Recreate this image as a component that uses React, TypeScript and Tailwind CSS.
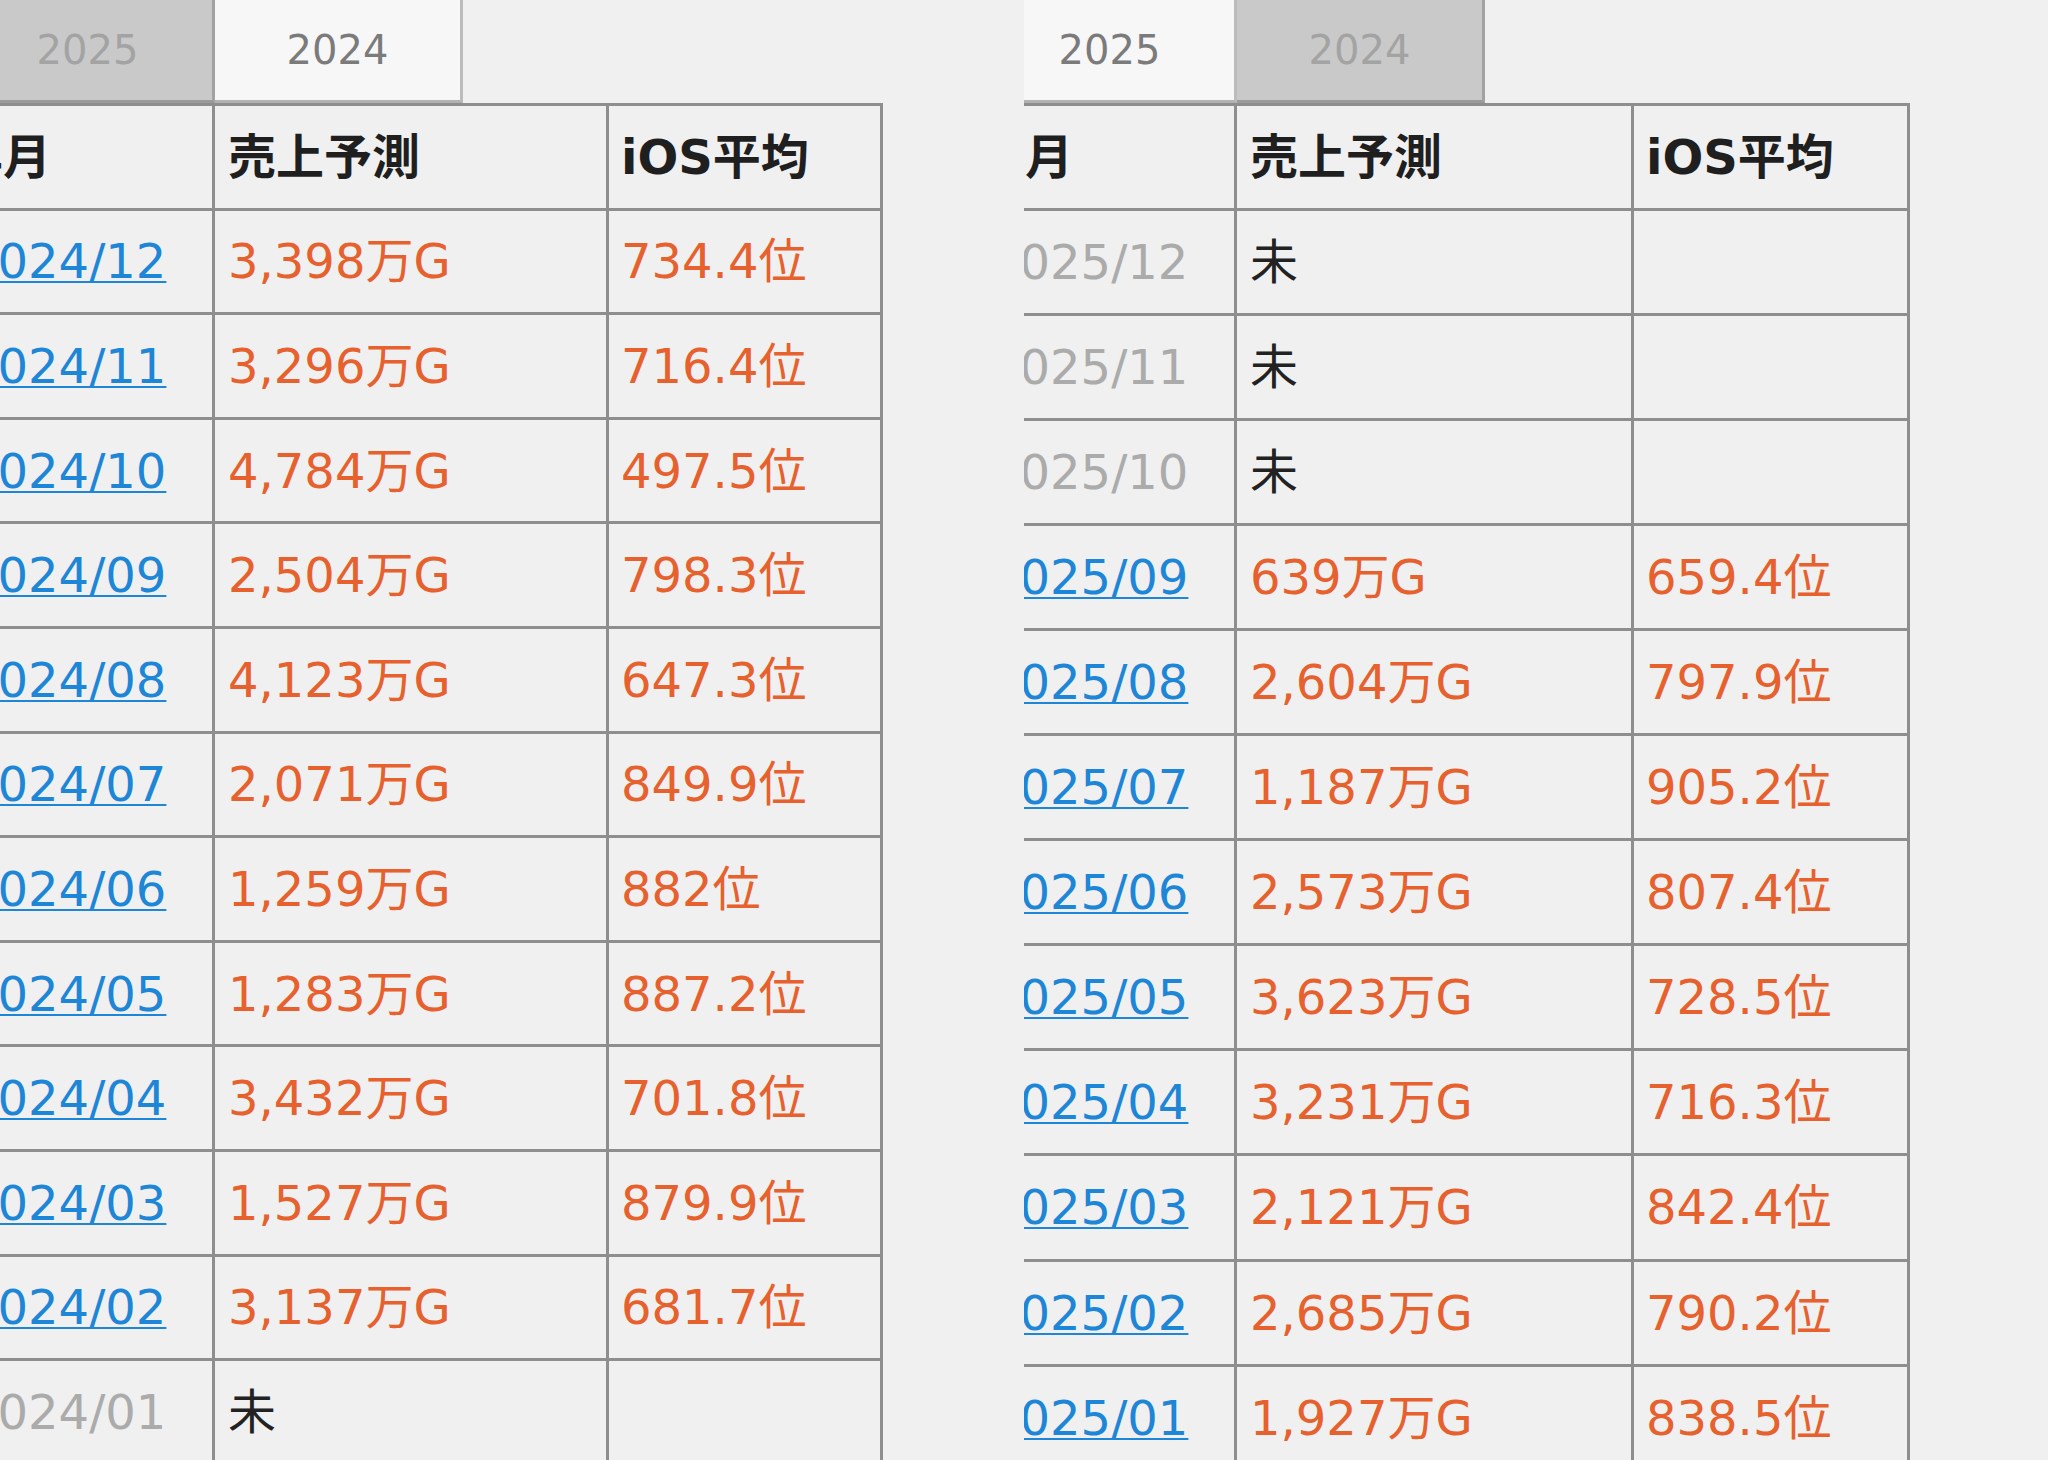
import React from 'react'

type Row = { month: string; sales?: string; rank?: string }

const rows2024: Row[] = [
  { month: '2024/12', sales: '3,398万G', rank: '734.4位' },
  { month: '2024/11', sales: '3,296万G', rank: '716.4位' },
  { month: '2024/10', sales: '4,784万G', rank: '497.5位' },
  { month: '2024/09', sales: '2,504万G', rank: '798.3位' },
  { month: '2024/08', sales: '4,123万G', rank: '647.3位' },
  { month: '2024/07', sales: '2,071万G', rank: '849.9位' },
  { month: '2024/06', sales: '1,259万G', rank: '882位' },
  { month: '2024/05', sales: '1,283万G', rank: '887.2位' },
  { month: '2024/04', sales: '3,432万G', rank: '701.8位' },
  { month: '2024/03', sales: '1,527万G', rank: '879.9位' },
  { month: '2024/02', sales: '3,137万G', rank: '681.7位' },
  { month: '2024/01' },
]

const rows2025: Row[] = [
  { month: '2025/12' },
  { month: '2025/11' },
  { month: '2025/10' },
  { month: '2025/09', sales: '639万G', rank: '659.4位' },
  { month: '2025/08', sales: '2,604万G', rank: '797.9位' },
  { month: '2025/07', sales: '1,187万G', rank: '905.2位' },
  { month: '2025/06', sales: '2,573万G', rank: '807.4位' },
  { month: '2025/05', sales: '3,623万G', rank: '728.5位' },
  { month: '2025/04', sales: '3,231万G', rank: '716.3位' },
  { month: '2025/03', sales: '2,121万G', rank: '842.4位' },
  { month: '2025/02', sales: '2,685万G', rank: '790.2位' },
  { month: '2025/01', sales: '1,927万G', rank: '838.5位' },
]

type Dims = { shift: string; rowH: string; col2: string; col3: string }

const leftDims: Dims = { shift: 'ml-[-48px]', rowH: 'h-[104.6px]', col2: 'w-[394px]', col3: 'w-[274px]' }
const rightDims: Dims = { shift: 'ml-[-50px]', rowH: 'h-[105.1px]', col2: 'w-[397px]', col3: 'w-[276px]' }

function Tab({ label, active, wide }: { label: string; active: boolean; wide?: boolean }) {
  return (
    <div
      className={
        'flex items-center justify-center h-full border-r-[3px] border-b-[3px] text-[40px] ' +
        (wide ? 'w-[252px] ' : 'w-[248px] ') +
        (active
          ? 'bg-[#f7f7f7] text-[#7b7b7b] border-r-[#bcbcbc] border-b-[#b2b2b2]'
          : 'bg-[#c9c9c9] text-[#a3a3a3] border-r-[#a2a2a2] border-b-[#9a9a9a]')
      }
    >
      {label}
    </div>
  )
}

function Panel({ year, rows, dims }: { year: '2025' | '2024'; rows: Row[]; dims: Dims }) {
  return (
    <div className="w-[1024px] h-full overflow-hidden bg-[#f0f0f0]">
      <div className={'flex flex-col w-[940px] ' + dims.shift}>
        {/* year tabs */}
        <div className="flex h-[103px] pl-[11px]">
          <Tab label="2025" active={year === '2025'} wide />
          <Tab label="2024" active={year === '2024'} />
        </div>

        {/* table */}
        <div className="self-start border-t-[3px] border-[#8e8e8e]">
          <div className={'flex border-b-[3px] border-[#8e8e8e] font-bold text-[#1f1f1f] h-[104.6px]'}>
            <div className="w-[263px] flex items-center pl-[3px] border-r-[3px] border-[#8e8e8e]">年月</div>
            <div className={'flex items-center pl-[13px] border-r-[3px] border-[#8e8e8e] ' + dims.col2}>売上予測</div>
            <div className={'flex items-center pl-[12px] border-r-[3px] border-[#8e8e8e] ' + dims.col3}>iOS平均</div>
          </div>
          {rows.map((r) => (
            <div key={r.month} className={'flex border-b-[3px] border-[#8e8e8e] ' + dims.rowH}>
              <div className="w-[263px] flex items-center pl-[15px] border-r-[3px] border-[#8e8e8e]">
                {r.sales ? (
                  <a className="text-[#1d86d6] underline decoration-2 underline-offset-[3px]">{r.month}</a>
                ) : (
                  <span className="text-[#ababab]">{r.month}</span>
                )}
              </div>
              <div className={'flex items-center pl-[13px] border-r-[3px] border-[#8e8e8e] ' + dims.col2}>
                {r.sales ? (
                  <span className="text-[#e6612d]">{r.sales}</span>
                ) : (
                  <span className="text-[#222]">未</span>
                )}
              </div>
              <div className={'flex items-center pl-[12px] border-r-[3px] border-[#8e8e8e] ' + dims.col3}>
                {r.rank && <span className="text-[#e6612d]">{r.rank}</span>}
              </div>
            </div>
          ))}
        </div>
      </div>
    </div>
  )
}

export default function App() {
  return (
    <div
      className="flex w-[2048px] h-[1460px] overflow-hidden bg-[#f0f0f0] text-[48px] leading-none"
      style={{ fontFamily: '"DejaVu Sans", "Noto Sans CJK JP", sans-serif' }}
    >
      <Panel year="2024" rows={rows2024} dims={leftDims} />
      <Panel year="2025" rows={rows2025} dims={rightDims} />
    </div>
  )
}
